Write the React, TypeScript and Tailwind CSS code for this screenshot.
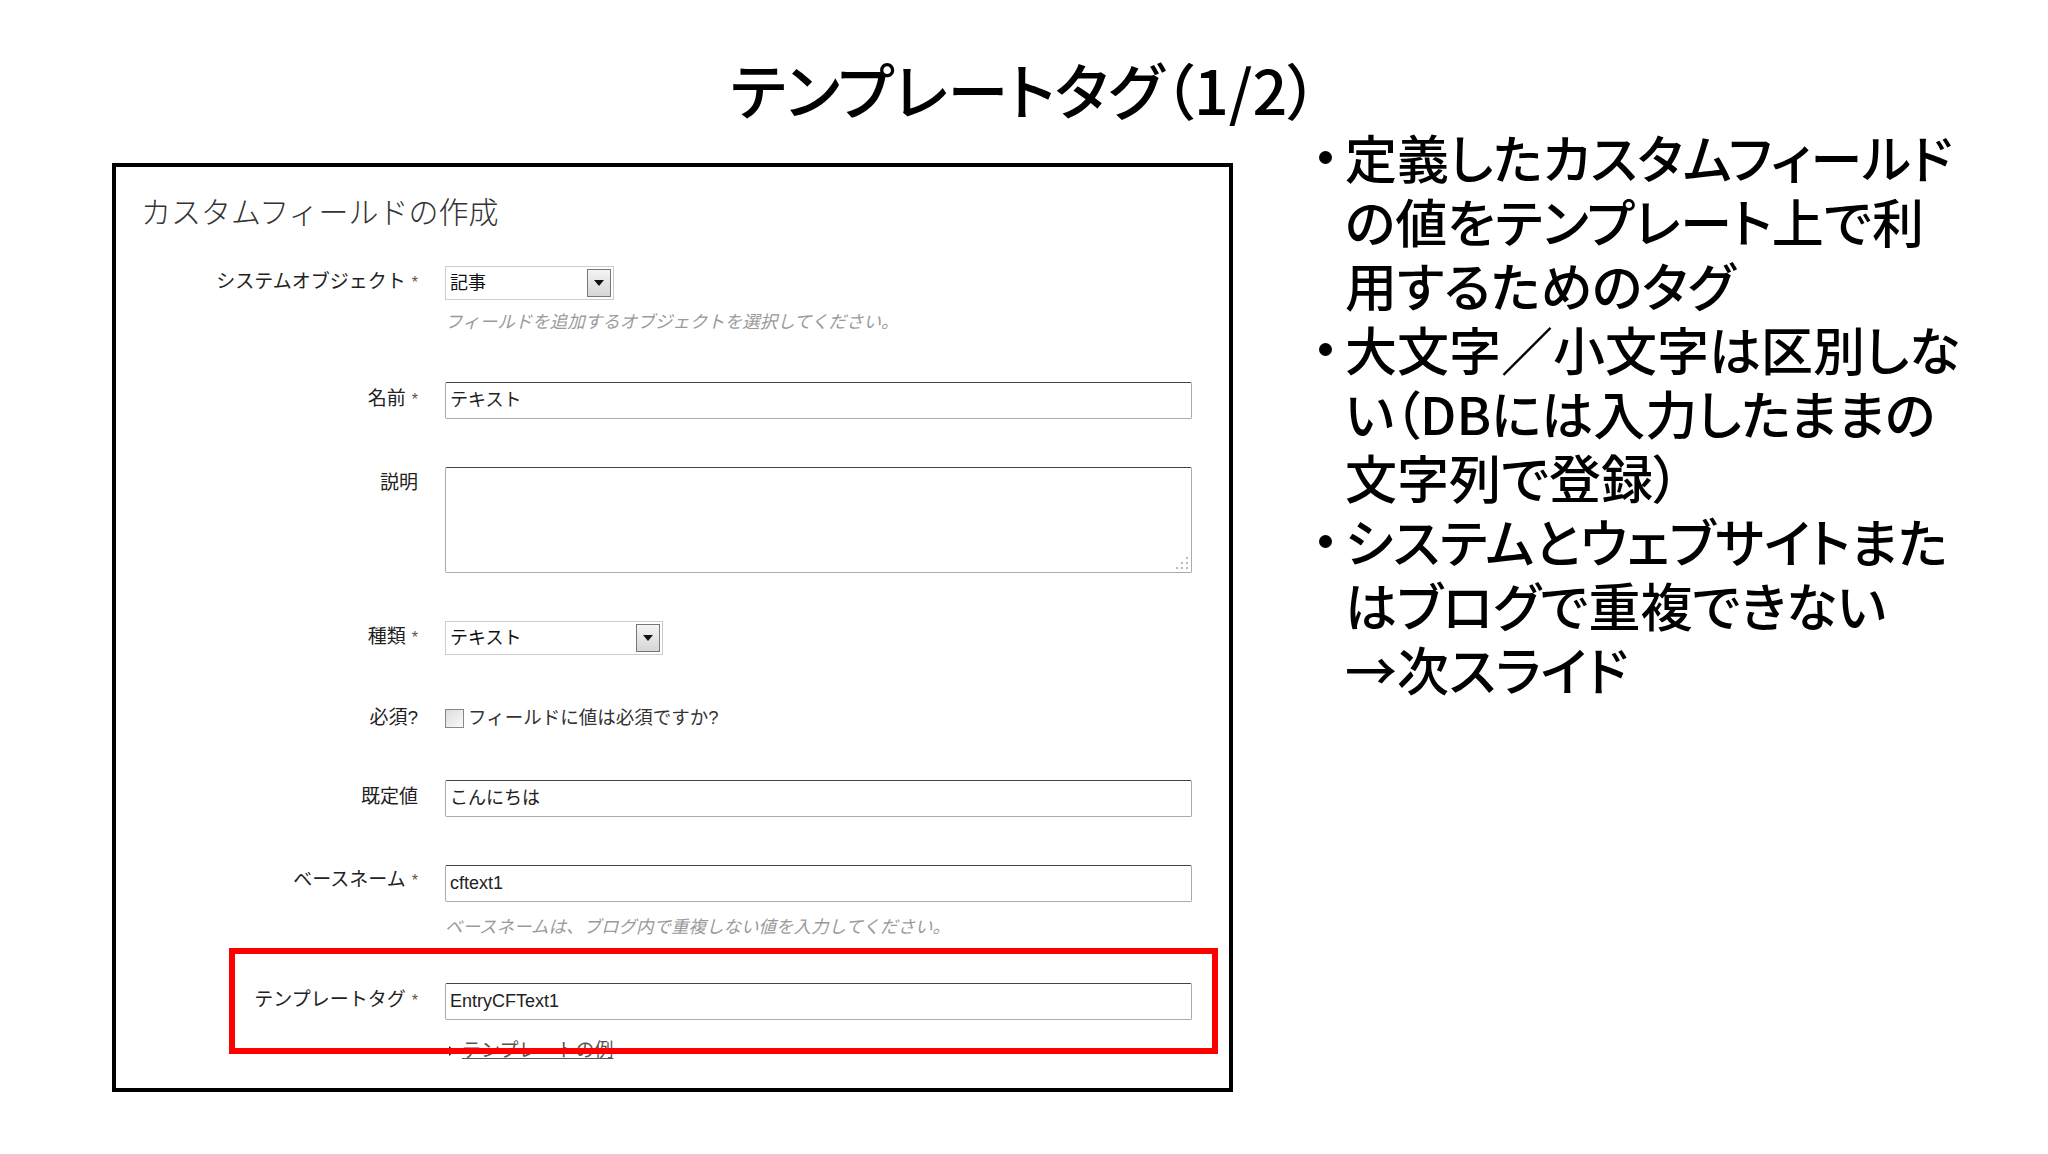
import type { ReactNode } from 'react'

const jp = "font-['Noto_Sans_CJK_JP',sans-serif]"
const ui = "font-['Liberation_Sans','Noto_Sans_CJK_JP',sans-serif]"

function Label({ children, className = '' }: { children: ReactNode; className?: string }) {
  return (
    <div className={`w-[277px] shrink-0 text-right text-[19px] text-[#222] ${className}`}>
      {children}
    </div>
  )
}

function Star() {
  return <span className="ml-[6px] text-[16px] text-[#555]">*</span>
}

function TextInput({ value }: { value: string }) {
  return (
    <div className="flex h-[37px] w-[747px] items-center rounded-[2px] border border-[#aaa] border-t-[#444] bg-white px-[4px] text-[18px] text-[#222]">
      {value}
    </div>
  )
}

function Select({ value, width }: { value: string; width: string }) {
  return (
    <div className={`flex h-[34px] ${width} items-center justify-between border border-[#ccc] bg-white pl-[4px] pr-[2px] text-[18px] text-[#111]`}>
      <span>{value}</span>
      <span className="flex h-[28px] w-[24px] items-center justify-center border border-[#777] bg-gradient-to-b from-[#f4f4f4] to-[#d6d6d6]">
        <svg width="10" height="6" viewBox="0 0 10 6">
          <path d="M0 0h10L5 6z" fill="#111" />
        </svg>
      </span>
    </div>
  )
}

function Hint({ children }: { children: ReactNode }) {
  return <div className="text-[17.5px] italic leading-[24px] text-[#9a9a9a]">{children}</div>
}

export default function App() {
  return (
    <div className={`h-[1154px] w-[2048px] overflow-hidden bg-white ${jp}`}>
      <h1 className="pt-[50px] text-center text-[61px] leading-[78px] font-medium text-black [font-feature-settings:'palt']">
        テンプレートタグ（1/2）
      </h1>

      <div className="flex items-start">
        <div className="ml-[112px] mt-[35px] h-[929px] w-[1121px] shrink-0 border-4 border-black px-[25px] pt-[23px]">
          <div className="text-[30px] leading-[40px] font-light text-[#333]">カスタムフィールドの作成</div>

          <div className={`${ui} flex flex-col`}>
            {/* システムオブジェクト */}
            <div className="mt-[36px] flex items-start gap-[27px]">
              <Label className="leading-[32px]">システムオブジェクト<Star /></Label>
              <div className="flex flex-col">
                <Select value="記事" width="w-[169px]" />
                <div className="mt-[10px]">
                  <Hint>フィールドを追加するオブジェクトを選択してください。</Hint>
                </div>
              </div>
            </div>

            {/* 名前 */}
            <div className="mt-[48px] flex items-start gap-[27px]">
              <Label className="leading-[33px]">名前<Star /></Label>
              <TextInput value="テキスト" />
            </div>

            {/* 説明 */}
            <div className="mt-[48px] flex items-start gap-[27px]">
              <Label className="pt-[2px] leading-[28px]">説明</Label>
              <div className="relative h-[106px] w-[747px] rounded-[2px] border border-[#aaa] border-t-[#444] bg-white">
                <svg className="absolute bottom-[2px] right-[2px]" width="14" height="14" viewBox="0 0 14 14">
                  <g fill="#bbb">
                    <rect x="11" y="1" width="2" height="2" />
                    <rect x="6" y="6" width="2" height="2" />
                    <rect x="11" y="6" width="2" height="2" />
                    <rect x="1" y="11" width="2" height="2" />
                    <rect x="6" y="11" width="2" height="2" />
                    <rect x="11" y="11" width="2" height="2" />
                  </g>
                </svg>
              </div>
            </div>

            {/* 種類 */}
            <div className="mt-[48px] flex items-start gap-[27px]">
              <Label className="leading-[32px]">種類<Star /></Label>
              <Select value="テキスト" width="w-[218px]" />
            </div>

            {/* 必須? */}
            <div className="mt-[53px] flex items-center gap-[27px]">
              <Label className="leading-[20px]">必須?</Label>
              <div className="flex items-center gap-[4px] text-[18.5px] leading-[20px] text-[#333]">
                <span className="h-[19px] w-[19px] border border-[#888] bg-gradient-to-br from-[#dcdcdc] to-[#fafafa]" />
                <span>フィールドに値は必須ですか?</span>
              </div>
            </div>

            {/* 既定値 */}
            <div className="mt-[52px] flex items-start gap-[27px]">
              <Label className="leading-[33px]">既定値</Label>
              <TextInput value="こんにちは" />
            </div>

            {/* ベースネーム */}
            <div className="mt-[48px] flex items-start gap-[27px]">
              <Label className="leading-[30px]">ベースネーム<Star /></Label>
              <div className="flex flex-col">
                <TextInput value="cftext1" />
                <div className="mt-[13px]">
                  <Hint>ベースネームは、ブログ内で重複しない値を入力してください。</Hint>
                </div>
              </div>
            </div>

            {/* テンプレートタグ */}
            <div className="relative mt-[44px] flex items-start gap-[27px]">
              <Label className="leading-[33px]">テンプレートタグ<Star /></Label>
              <div className="flex flex-col">
                <TextInput value="EntryCFText1" />
                <div className="mt-[19px] flex items-center gap-[7px] pl-[4px] text-[19px] leading-[24px] text-[#555]">
                  <svg width="6" height="10" viewBox="0 0 6 10">
                    <path d="M0 0l6 5-6 5z" fill="#222" />
                  </svg>
                  <span className="underline">テンプレートの例</span>
                </div>
              </div>
              <div className="pointer-events-none absolute left-[88px] top-[-35px] h-[106px] w-[989px] border-[6px] border-[#ff0000]" />
            </div>
          </div>
        </div>

        <div className="ml-[86px] mt-[-3px] text-[52px] leading-[64px] font-medium text-black [font-feature-settings:'palt']">
          {[
            ['定義したカスタムフィールド', 'の値をテンプレート上で利', '用するためのタグ'],
            ['大文字／小文字は区別しな', 'い（DBには入力したままの', '文字列で登録）'],
            ['システムとウェブサイトまた', 'はブログで重複できない', '→次スライド'],
          ].map((lines, i) => (
            <div key={i} className="flex">
              <span className="flex h-[64px] w-[26px] shrink-0 items-center">
                <span className="h-[13px] w-[13px] rounded-full bg-black" />
              </span>
              <div className="flex flex-col whitespace-nowrap">
                {lines.map((l) => (
                  <span key={l}>{l}</span>
                ))}
              </div>
            </div>
          ))}
        </div>
      </div>
    </div>
  )
}
